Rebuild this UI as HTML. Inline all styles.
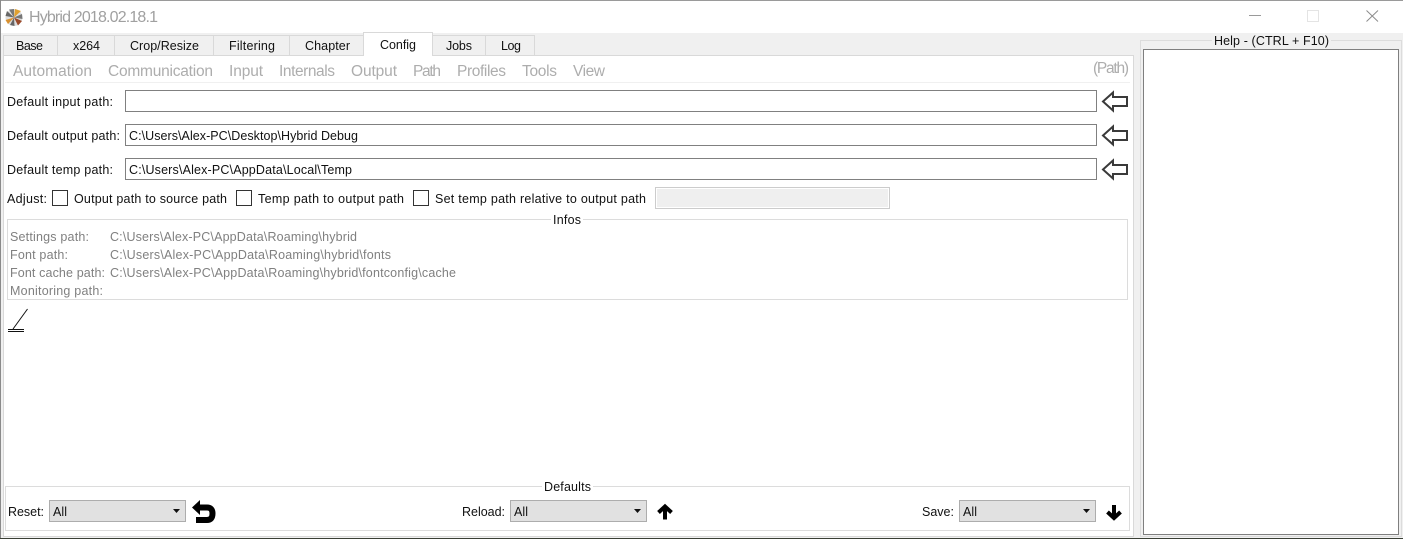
<!DOCTYPE html>
<html lang="en"><head><meta charset="utf-8"><title>Hybrid 2018.02.18.1</title>
<style>
html,body{margin:0;padding:0;background:#f0f0f0;overflow:hidden}
svg{display:block}
text{font-family:"Liberation Sans",sans-serif;font-size:12.5px;fill:#111;white-space:pre}
.n{font-size:15.5px;fill:#adadad}
.g{fill:#808080}
</style></head><body>
<svg xmlns="http://www.w3.org/2000/svg" width="1403" height="539" viewBox="0 0 1403 539">
<rect width="1403" height="539" fill="#f0f0f0"/>
<rect width="1403" height="33" fill="#fff"/>
<rect width="1403" height="1" fill="#9a9a9a"/>
<rect width="1" height="539" fill="#8a8a8a"/>
<rect y="538" width="1403" height="1" fill="#3a4036"/>
<!-- logo -->
<g>
<circle cx="14" cy="17.500" r="8.500" fill="#ddd"/>
<path d="M14 17.500L9 9.500L14 9Z" fill="#777"/>
<path d="M14 17.500L15 9L21 11Z" fill="#e0a030"/>
<path d="M14 17.500L22 14L22.500 19Z" fill="#777"/>
<path d="M14 17.500L22 21L18 25.500Z" fill="#9a4a2a"/>
<path d="M14 17.500L14.500 26L10 25Z" fill="#666"/>
<path d="M14 17.500L8 24L5.500 20Z" fill="#d89030"/>
<path d="M14 17.500L5.500 16L7 11Z" fill="#666"/>
</g>
<text x="29" y="22" style="font-size:16px;fill:#a0a0a0" textLength="129" lengthAdjust="spacing">Hybrid 2018.02.18.1</text>
<!-- window controls -->
<rect x="1249" y="15" width="12" height="1" fill="#9a9a9a"/>
<rect x="1307.500" y="10.500" width="11" height="11" fill="none" stroke="#e4e4e4"/>
<path d="M1366.500 10.500L1378 21.500M1378 10.500L1366.500 21.500" stroke="#8c8c8c" fill="none"/>
<!-- tabs -->
<g fill="#f0f0f0" stroke="#d9d9d9">
<rect x="3.500" y="35.500" width="54" height="20"/>
<rect x="57.500" y="35.500" width="57" height="20"/>
<rect x="114.500" y="35.500" width="99" height="20"/>
<rect x="213.500" y="35.500" width="76" height="20"/>
<rect x="289.500" y="35.500" width="74" height="20"/>
<rect x="432.500" y="35.500" width="53" height="20"/>
<rect x="485.500" y="35.500" width="49" height="20"/>
</g>
<!-- panel -->
<rect x="3.500" y="55.500" width="1130" height="481" fill="#fff" stroke="#d9d9d9"/>
<path d="M363.500 56V32.500H432.500V56" fill="#fff" stroke="#d9d9d9"/>
<rect x="364" y="33" width="68" height="24" fill="#fff"/>
<text x="16" y="50" textLength="27" lengthAdjust="spacing">Base</text>
<text x="73" y="50" textLength="27" lengthAdjust="spacing">x264</text>
<text x="130" y="50" textLength="69" lengthAdjust="spacing">Crop/Resize</text>
<text x="229" y="50" textLength="46" lengthAdjust="spacing">Filtering</text>
<text x="305" y="50" textLength="45" lengthAdjust="spacing">Chapter</text>
<text x="380" y="49" textLength="36" lengthAdjust="spacing">Config</text>
<text x="446" y="50" textLength="26" lengthAdjust="spacing">Jobs</text>
<text x="501" y="50" textLength="20" lengthAdjust="spacing">Log</text>
<!-- nav -->
<text class="n" x="13" y="76" textLength="79" lengthAdjust="spacing">Automation</text>
<text class="n" x="108" y="76" textLength="105" lengthAdjust="spacing">Communication</text>
<text class="n" x="229" y="76" textLength="34" lengthAdjust="spacing">Input</text>
<text class="n" x="279" y="76" textLength="56" lengthAdjust="spacing">Internals</text>
<text class="n" x="351" y="76" textLength="46" lengthAdjust="spacing">Output</text>
<text class="n" x="413" y="76" textLength="28" lengthAdjust="spacing">Path</text>
<text class="n" x="457" y="76" textLength="49" lengthAdjust="spacing">Profiles</text>
<text class="n" x="522" y="76" textLength="35" lengthAdjust="spacing">Tools</text>
<text class="n" x="573" y="76" textLength="32" lengthAdjust="spacing">View</text>
<text class="n" x="1093" y="73" textLength="36" lengthAdjust="spacing">(Path)</text>
<rect x="5" y="82" width="1125" height="1" fill="#f0f0f0"/>
<!-- path rows -->
<text x="7" y="106" textLength="106" lengthAdjust="spacing">Default input path:</text>
<text x="7" y="140" textLength="113" lengthAdjust="spacing">Default output path:</text>
<text x="7" y="174" textLength="106" lengthAdjust="spacing">Default temp path:</text>
<g fill="#fff" stroke="#808080">
<rect x="125.500" y="90.500" width="971" height="21"/>
<rect x="125.500" y="124.500" width="971" height="21"/>
<rect x="125.500" y="158.500" width="971" height="21"/>
</g>
<text x="129" y="140" textLength="229" lengthAdjust="spacing">C:\Users\Alex-PC\Desktop\Hybrid Debug</text>
<text x="129" y="174" textLength="223" lengthAdjust="spacing">C:\Users\Alex-PC\AppData\Local\Temp</text>
<g fill="#fff" stroke="#3a3a3a" stroke-width="2">
<path d="M1103 101.500L1113 92.500V97H1127V106H1113V110.500Z"/>
<path d="M1103 135.500L1113 126.500V131H1127V140H1113V144.500Z"/>
<path d="M1103 169.500L1113 160.500V165H1127V174H1113V178.500Z"/>
</g>
<!-- adjust -->
<text x="7" y="203" textLength="40" lengthAdjust="spacing">Adjust:</text>
<g fill="#fff" stroke="#333">
<rect x="52.500" y="190.500" width="15" height="15"/>
<rect x="236.500" y="190.500" width="15" height="15"/>
<rect x="413.500" y="190.500" width="15" height="15"/>
</g>
<text x="74" y="203" textLength="153" lengthAdjust="spacing">Output path to source path</text>
<text x="258" y="203" textLength="146" lengthAdjust="spacing">Temp path to output path</text>
<text x="435" y="203" textLength="211" lengthAdjust="spacing">Set temp path relative to output path</text>
<rect x="655.500" y="187.500" width="234" height="21" fill="#fff" stroke="#ccc"/>
<rect x="657" y="189" width="231" height="18" fill="#efefef"/>
<!-- infos -->
<rect x="7.500" y="219.500" width="1120" height="80" fill="#fff" stroke="#dcdcdc"/>
<rect x="551" y="215" width="32" height="8" fill="#fff"/>
<text x="553" y="224" textLength="28" lengthAdjust="spacing">Infos</text>
<text class="g" x="10" y="241" textLength="79" lengthAdjust="spacing">Settings path:</text>
<text class="g" x="10" y="259" textLength="58" lengthAdjust="spacing">Font path:</text>
<text class="g" x="10" y="277" textLength="95" lengthAdjust="spacing">Font cache path:</text>
<text class="g" x="10" y="295" textLength="93" lengthAdjust="spacing">Monitoring path:</text>
<text class="g" x="110" y="241" textLength="247" lengthAdjust="spacing">C:\Users\Alex-PC\AppData\Roaming\hybrid</text>
<text class="g" x="110" y="259" textLength="281" lengthAdjust="spacing">C:\Users\Alex-PC\AppData\Roaming\hybrid\fonts</text>
<text class="g" x="110" y="277" textLength="346" lengthAdjust="spacing">C:\Users\Alex-PC\AppData\Roaming\hybrid\fontconfig\cache</text>
<!-- angle icon -->
<path d="M27.500 309L13 329" stroke="#111" fill="none"/>
<rect x="8" y="329" width="16" height="1" fill="#111"/>
<rect x="8" y="331" width="16" height="1" fill="#111"/>
<!-- defaults -->
<rect x="5.500" y="486.500" width="1124" height="44" fill="#fff" stroke="#dcdcdc"/>
<rect x="542" y="482" width="51" height="8" fill="#fff"/>
<text x="544" y="491" textLength="47" lengthAdjust="spacing">Defaults</text>
<text x="8" y="516" textLength="36" lengthAdjust="spacing">Reset:</text>
<text x="462" y="516" textLength="43" lengthAdjust="spacing">Reload:</text>
<text x="922" y="516" textLength="32" lengthAdjust="spacing">Save:</text>
<g fill="#e1e1e1" stroke="#adadad">
<rect x="49.500" y="500.500" width="136" height="21"/>
<rect x="510.500" y="500.500" width="136" height="21"/>
<rect x="959.500" y="500.500" width="136" height="21"/>
</g>
<text x="53" y="516" textLength="14" lengthAdjust="spacing">All</text>
<text x="514" y="516" textLength="14" lengthAdjust="spacing">All</text>
<text x="963" y="516" textLength="14" lengthAdjust="spacing">All</text>
<path d="M173 509H180L176.500 513Z M634 509H641L637.500 513Z M1083 509H1090L1086.500 513Z" fill="#111"/>
<!-- action icons -->
<path d="M192 507.500L200 500V515Z" fill="#000"/>
<path d="M198 507.500H207Q212.500 507.500 212.500 513.500Q212.500 520 207 520H196" fill="none" stroke="#000" stroke-width="6"/>
<path d="M665 519.500V507M658.500 512.500L665 506.500L671.500 512.500" fill="none" stroke="#000" stroke-width="4"/>
<path d="M1114 505V517.500M1107.500 512L1114 518L1120.500 512" fill="none" stroke="#000" stroke-width="4"/>
<!-- help -->
<rect x="1140.500" y="40.500" width="261" height="496" fill="#f0f0f0" stroke="#dcdcdc"/>
<rect x="1212" y="36" width="119" height="9" fill="#f0f0f0"/>
<text x="1214" y="45" textLength="115" lengthAdjust="spacing">Help - (CTRL + F10)</text>
<rect x="1143.500" y="49.500" width="255" height="485" fill="#fff" stroke="#7f7f7f"/>
</svg>
</body></html>
